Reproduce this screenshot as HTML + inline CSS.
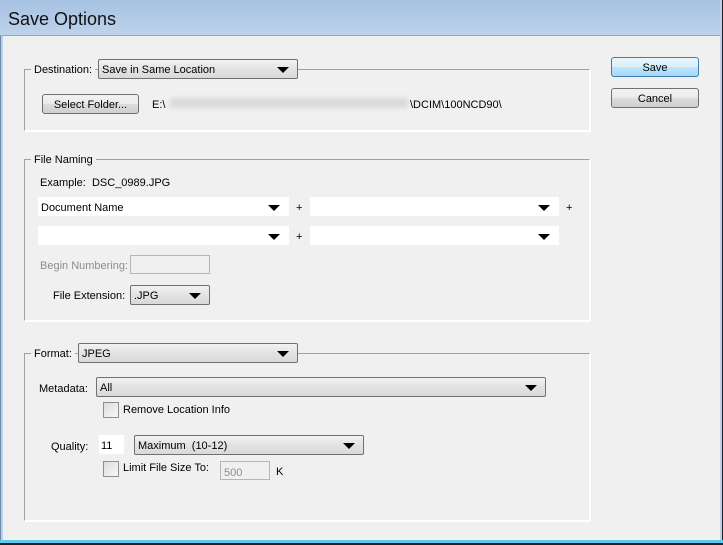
<!DOCTYPE html>
<html><head><style>
*{box-sizing:border-box;margin:0;padding:0}
body{width:723px;height:545px;position:relative;overflow:hidden;background:#f0f0f0;font-family:"Liberation Sans",sans-serif;font-size:11px;color:#000}
.a{position:absolute}
.title{left:0;top:0;width:723px;height:36px;background:linear-gradient(#a6c1e2,#bdd3ec);border-bottom:1px solid #8aa6c8}
.title span{position:absolute;left:8px;top:9px;font-size:18px;color:#111}
.frameL{left:0;top:36px;width:3px;height:509px;background:#b9d1ea;border-left:1px solid #6d87a6}
.frameR{right:0;top:0;width:3px;height:545px;background:#b9d1ea;border-right:1px solid #222}
.frameB{left:0;top:540px;width:723px;height:5px;background:#5fc8ef;border-bottom:2px solid #222}
.grp{border-style:solid;border-color:#a0a0a0 #fff #fff #a0a0a0;border-width:1px;box-shadow:1px 1px #fff}
.lbl{background:#f0f0f0;padding:0 3px}
.dd{border:1px solid #707070;border-radius:2px;background:linear-gradient(#f2f2f2,#e3e3e3 50%,#d9d9d9);padding:4px 3px 0;height:20px}
.wh{background:#fff;border:1px solid #fff;padding:4px 2px 0;height:19px}
.arr{position:absolute;right:8px;top:7px;width:0;height:0;border-left:6px solid transparent;border-right:6px solid transparent;border-top:6px solid #000}
.btn{border:1px solid #707070;border-radius:3px;background:linear-gradient(#f2f2f2,#ebebeb 50%,#dddddd 51%,#cfcfcf);text-align:center;padding-top:4px;height:20px}
.chk{width:16px;height:16px;border:1px solid #8f8f8f;background:linear-gradient(135deg,#dcdcdc,#f8f8f8)}
.dis{color:#8d8d8d}
.box{border:1px solid #b5b5b5;background:#f0f0f0}
</style></head><body>
<div class="a title"><span>Save Options</span></div>
<div class="a frameL"></div>
<div class="a frameR"></div>
<div class="a frameB"></div>

<div class="a grp" style="left:24px;top:69px;width:566px;height:62px"></div>
<div class="a lbl" style="left:31px;top:64px">Destination:</div>
<div class="a dd" style="left:98px;top:59px;width:200px">Save in Same Location<div class="arr"></div></div>
<div class="a btn" style="left:42px;top:94px;width:97px">Select Folder...</div>
<div class="a" style="left:152px;top:99px">E:\</div>
<div class="a" style="left:170px;top:98px;width:238px;height:10px;background:#dadada;filter:blur(2px)"></div>
<div class="a" style="left:410px;top:99px">\DCIM\100NCD90\</div>

<div class="a btn" style="left:611px;top:57px;width:88px;border-color:#3c7fb1;background:linear-gradient(#eaf6fd,#d9f0fc 50%,#bee6fd 51%,#a7d9f5)">Save</div>
<div class="a btn" style="left:611px;top:88px;width:88px">Cancel</div>

<div class="a grp" style="left:24px;top:159px;width:566px;height:162px"></div>
<div class="a lbl" style="left:31px;top:154px">File Naming</div>
<div class="a" style="left:40px;top:177px">Example:&nbsp; DSC_0989.JPG</div>
<div class="a wh" style="left:38px;top:197px;width:251px">Document Name<div class="arr"></div></div>
<div class="a" style="left:296px;top:202px">+</div>
<div class="a wh" style="left:310px;top:197px;width:249px"><div class="arr"></div></div>
<div class="a" style="left:566px;top:202px">+</div>
<div class="a wh" style="left:38px;top:226px;width:251px"><div class="arr"></div></div>
<div class="a" style="left:296px;top:231px">+</div>
<div class="a wh" style="left:310px;top:226px;width:249px"><div class="arr"></div></div>
<div class="a dis" style="left:40px;top:260px">Begin Numbering:</div>
<div class="a box" style="left:130px;top:255px;width:80px;height:19px"></div>
<div class="a" style="left:53px;top:290px">File Extension:</div>
<div class="a dd" style="left:130px;top:285px;width:80px">.JPG<div class="arr"></div></div>

<div class="a grp" style="left:24px;top:353px;width:566px;height:168px"></div>
<div class="a lbl" style="left:31px;top:348px">Format:</div>
<div class="a dd" style="left:78px;top:343px;width:220px">JPEG<div class="arr"></div></div>
<div class="a" style="left:39px;top:383px">Metadata:</div>
<div class="a dd" style="left:96px;top:377px;width:450px">All<div class="arr"></div></div>
<div class="a chk" style="left:103px;top:402px"></div>
<div class="a" style="left:123px;top:404px">Remove Location Info</div>
<div class="a" style="left:51px;top:441px">Quality:</div>
<div class="a" style="left:99px;top:435px;width:25px;height:19px;background:#fff;padding:5px 2px 0">11</div>
<div class="a dd" style="left:134px;top:435px;width:230px">Maximum&nbsp; (10-12)<div class="arr"></div></div>
<div class="a chk" style="left:103px;top:461px"></div>
<div class="a" style="left:123px;top:462px">Limit File Size To:</div>
<div class="a box dis" style="left:220px;top:461px;width:50px;height:19px;padding:5px 3px 0">500</div>
<div class="a" style="left:276px;top:466px">K</div>
</body></html>
